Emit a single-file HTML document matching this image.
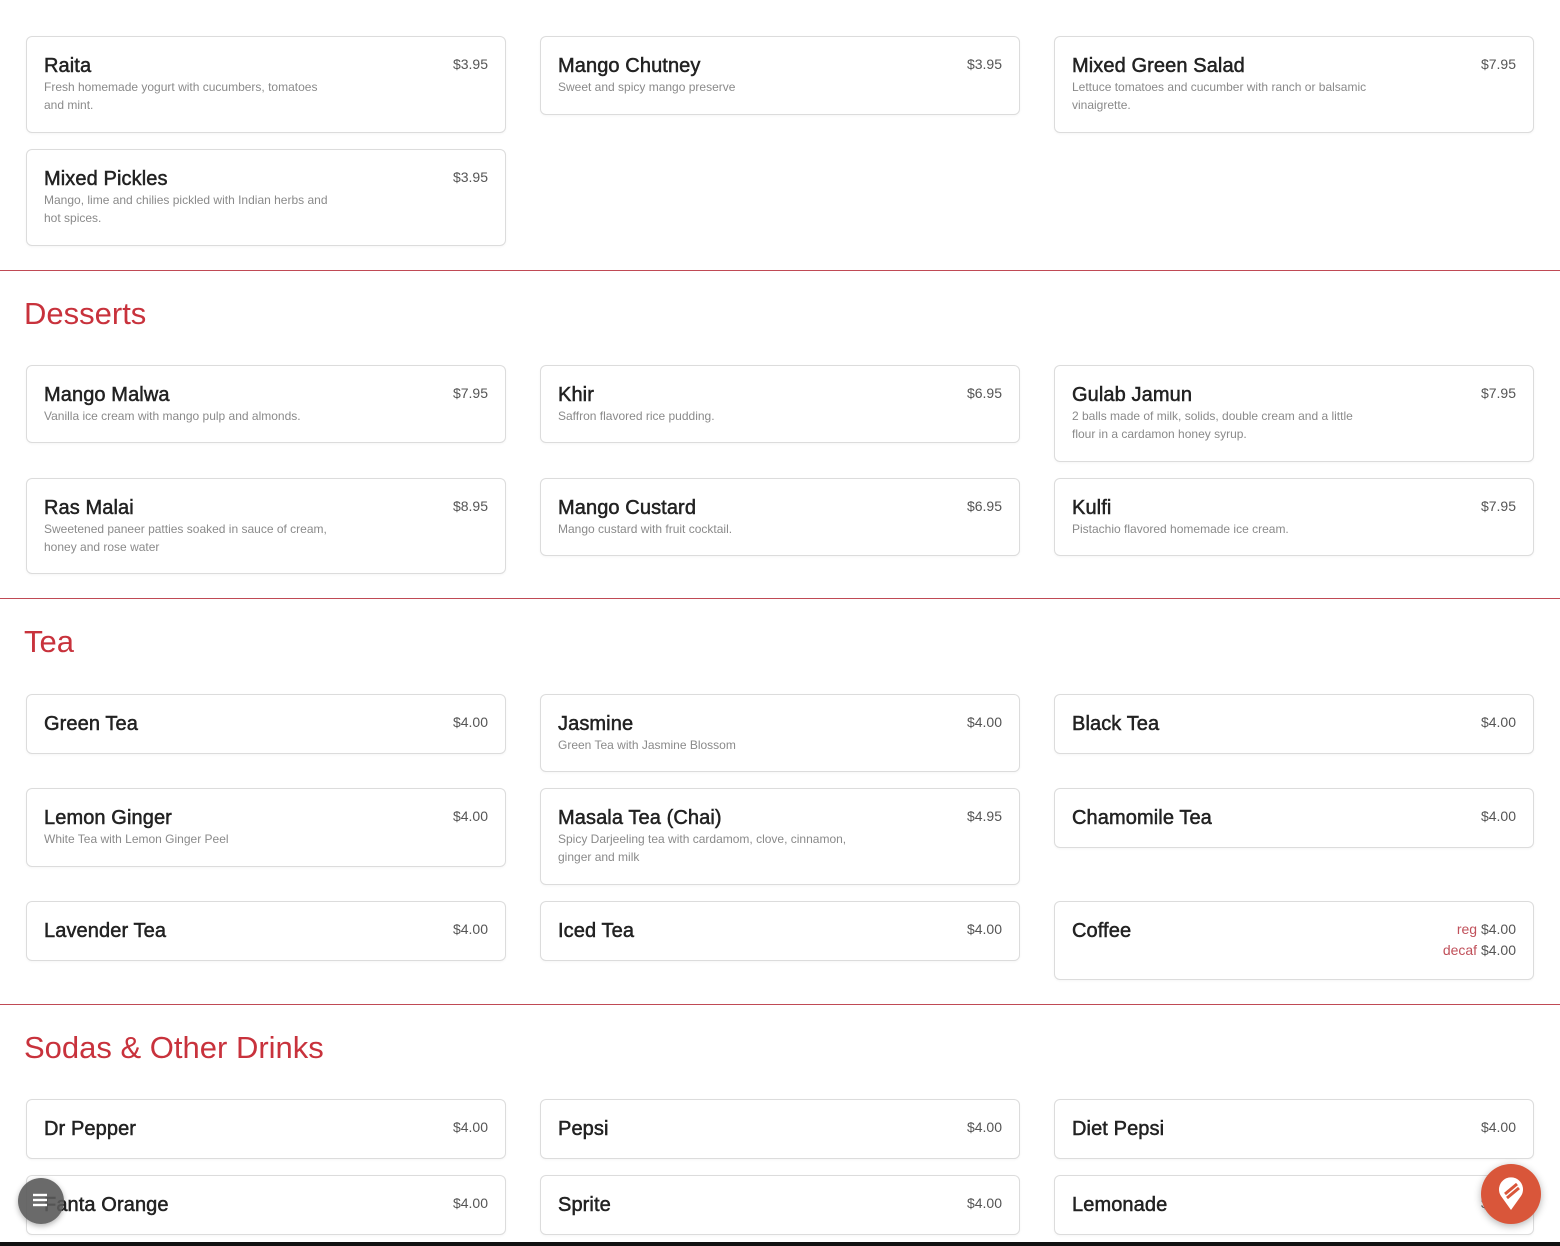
<!DOCTYPE html>
<html><head><meta charset="utf-8"><style>
*{margin:0;padding:0;box-sizing:border-box}
body{width:1560px;height:1246px;overflow:hidden;background:#fff;font-family:"Liberation Sans",sans-serif;position:relative;color:#222}
.c{position:absolute;width:480px;border:1px solid #dcdcdc;border-radius:6px;background:#fff;padding:18px 18px 17px 17px;box-shadow:0 1px 2px rgba(0,0,0,.04)}
.c1{left:26px}.c2{left:540px}.c3{left:1054px}
.t{font-size:20px;line-height:23px;font-weight:normal;-webkit-text-stroke:0.5px #222;color:#222;letter-spacing:.1px}
.d{font-size:12px;line-height:18px;color:#8a8a8a;white-space:nowrap}
.p{position:absolute;top:17px;right:17px;font-size:14px;line-height:20px;color:#555;text-align:right}
.p span{color:#c0505a}
.hr{position:absolute;left:0;width:1560px;height:1px;background:#c04a55}
.h{position:absolute;left:24px;font-size:31px;line-height:40px;color:#c8323c}
</style></head><body>

<div class="c c1" style="top:36px;height:97px"><div class="t">Raita</div><div class="d">Fresh homemade yogurt with cucumbers, tomatoes<br>and mint.</div><div class="p">$3.95</div></div>
<div class="c c2" style="top:36px;height:79px"><div class="t">Mango Chutney</div><div class="d">Sweet and spicy mango preserve</div><div class="p">$3.95</div></div>
<div class="c c3" style="top:36px;height:97px"><div class="t">Mixed Green Salad</div><div class="d">Lettuce tomatoes and cucumber with ranch or balsamic<br>vinaigrette.</div><div class="p">$7.95</div></div>
<div class="c c1" style="top:149px;height:97px"><div class="t">Mixed Pickles</div><div class="d">Mango, lime and chilies pickled with Indian herbs and<br>hot spices.</div><div class="p">$3.95</div></div>

<div class="hr" style="top:270px"></div>
<div class="h" style="top:294px">Desserts</div>

<div class="c c1" style="top:365px;height:78px"><div class="t">Mango Malwa</div><div class="d">Vanilla ice cream with mango pulp and almonds.</div><div class="p">$7.95</div></div>
<div class="c c2" style="top:365px;height:78px"><div class="t">Khir</div><div class="d">Saffron flavored rice pudding.</div><div class="p">$6.95</div></div>
<div class="c c3" style="top:365px;height:97px"><div class="t">Gulab Jamun</div><div class="d">2 balls made of milk, solids, double cream and a little<br>flour in a cardamon honey syrup.</div><div class="p">$7.95</div></div>
<div class="c c1" style="top:478px;height:96px"><div class="t">Ras Malai</div><div class="d">Sweetened paneer patties soaked in sauce of cream,<br>honey and rose water</div><div class="p">$8.95</div></div>
<div class="c c2" style="top:478px;height:78px"><div class="t">Mango Custard</div><div class="d">Mango custard with fruit cocktail.</div><div class="p">$6.95</div></div>
<div class="c c3" style="top:478px;height:78px"><div class="t">Kulfi</div><div class="d">Pistachio flavored homemade ice cream.</div><div class="p">$7.95</div></div>

<div class="hr" style="top:598px"></div>
<div class="h" style="top:622px">Tea</div>

<div class="c c1" style="top:694px;height:60px"><div class="t">Green Tea</div><div class="p">$4.00</div></div>
<div class="c c2" style="top:694px;height:78px"><div class="t">Jasmine</div><div class="d">Green Tea with Jasmine Blossom</div><div class="p">$4.00</div></div>
<div class="c c3" style="top:694px;height:60px"><div class="t">Black Tea</div><div class="p">$4.00</div></div>
<div class="c c1" style="top:788px;height:79px"><div class="t">Lemon Ginger</div><div class="d">White Tea with Lemon Ginger Peel</div><div class="p">$4.00</div></div>
<div class="c c2" style="top:788px;height:97px"><div class="t">Masala Tea (Chai)</div><div class="d">Spicy Darjeeling tea with cardamom, clove, cinnamon,<br>ginger and milk</div><div class="p">$4.95</div></div>
<div class="c c3" style="top:788px;height:60px"><div class="t">Chamomile Tea</div><div class="p">$4.00</div></div>
<div class="c c1" style="top:901px;height:60px"><div class="t">Lavender Tea</div><div class="p">$4.00</div></div>
<div class="c c2" style="top:901px;height:60px"><div class="t">Iced Tea</div><div class="p">$4.00</div></div>
<div class="c c3" style="top:901px;height:79px"><div class="t">Coffee</div><div class="p" style="line-height:21px"><span>reg</span> $4.00<br><span>decaf</span> $4.00</div></div>

<div class="hr" style="top:1004px"></div>
<div class="h" style="top:1028px">Sodas &amp; Other Drinks</div>

<div class="c c1" style="top:1099px;height:60px"><div class="t">Dr Pepper</div><div class="p">$4.00</div></div>
<div class="c c2" style="top:1099px;height:60px"><div class="t">Pepsi</div><div class="p">$4.00</div></div>
<div class="c c3" style="top:1099px;height:60px"><div class="t">Diet Pepsi</div><div class="p">$4.00</div></div>
<div class="c c1" style="top:1175px;height:60px"><div class="t">Fanta Orange</div><div class="p">$4.00</div></div>
<div class="c c2" style="top:1175px;height:60px"><div class="t">Sprite</div><div class="p">$4.00</div></div>
<div class="c c3" style="top:1175px;height:60px"><div class="t">Lemonade</div><div class="p">$4.00</div></div>

<div style="position:absolute;left:18px;top:1178px;width:46px;height:46px;border-radius:50%;background:rgba(90,90,90,.9);box-shadow:0 2px 6px rgba(0,0,0,.3)">
<svg width="46" height="46" viewBox="0 0 46 46"><g stroke="#fff" stroke-width="2.4"><line x1="15" y1="17" x2="29" y2="17"/><line x1="15" y1="22" x2="29" y2="22"/><line x1="15" y1="27" x2="29" y2="27"/></g></svg></div>

<div style="position:absolute;left:1481px;top:1164px;width:60px;height:60px;border-radius:50%;background:#d9563a;box-shadow:0 2px 8px rgba(0,0,0,.3)">
<svg width="60" height="60" viewBox="0 0 60 60"><path d="M30 46 L20 32 A12 12 0 1 1 40 32 Z" fill="#fff"/><path d="M24 30 L36 20 M26 34 L38 24" stroke="#d9563a" stroke-width="3"/></svg></div>

<div style="position:absolute;left:0;top:1242px;width:1560px;height:4px;background:#111"></div>
</body></html>
